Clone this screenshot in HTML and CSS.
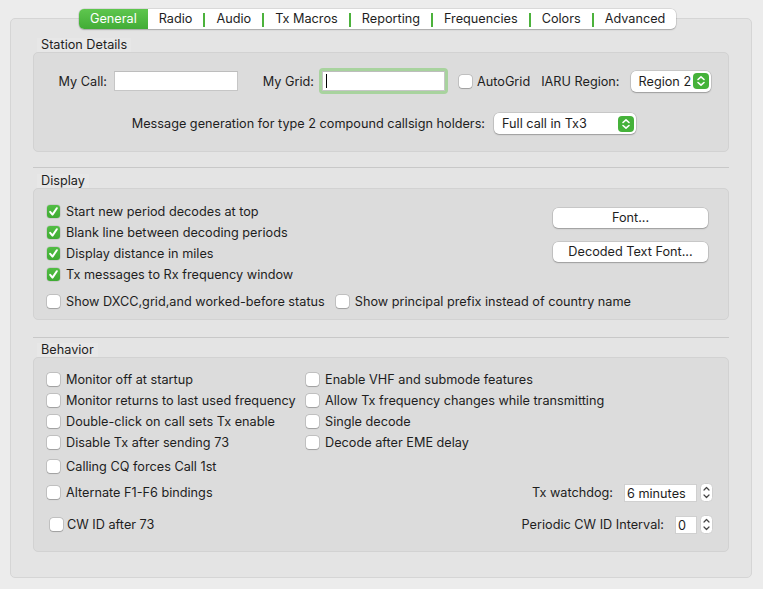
FILE: index.html
```html
<!DOCTYPE html>
<html lang="en">
<head>
    <meta charset="UTF-8">
    <title>Settings - General</title>
    <link rel="stylesheet" href="styles.css">
</head>
<body>
    <div class="window">
        <div class="tabbar">
            <div class="tab active">General</div>
            <div class="tab">Radio</div>
            <span class="tab-sep"></span>
            <div class="tab">Audio</div>
            <span class="tab-sep"></span>
            <div class="tab">Tx Macros</div>
            <span class="tab-sep"></span>
            <div class="tab">Reporting</div>
            <span class="tab-sep"></span>
            <div class="tab">Frequencies</div>
            <span class="tab-sep"></span>
            <div class="tab">Colors</div>
            <span class="tab-sep"></span>
            <div class="tab">Advanced</div>
        </div>

        <div class="pane">
            <!-- Station Details -->
            <div class="group-title">Station Details</div>
            <div class="group station">
                <div class="row-top">
                    <div class="lbl lbl-call">My Call:</div>
                    <div class="field field-call"></div>
                    <div class="lbl lbl-grid">My Grid:</div>
                    <div class="focus-ring">
                        <div class="field field-grid"><span class="caret"></span></div>
                    </div>
                    <div class="check check-autogrid"><span class="cb"></span><span>AutoGrid</span></div>
                    <div class="lbl lbl-iaru">IARU Region:</div>
                    <div class="select select-region">
                        <span>Region 2</span>
                        <svg class="stepper" width="16" height="16" viewBox="0 0 16 16"><rect x="0" y="0" width="16" height="16" rx="4" fill="#45b23a"/><polyline points="5,6.5 8,3.8 11,6.5" fill="none" stroke="#fff" stroke-width="1.6" stroke-linecap="round" stroke-linejoin="round"/><polyline points="5,9.5 8,12.2 11,9.5" fill="none" stroke="#fff" stroke-width="1.6" stroke-linecap="round" stroke-linejoin="round"/></svg>
                    </div>
                </div>
                <div class="row-msg">
                    <div class="lbl lbl-msg">Message generation for type 2 compound callsign holders:</div>
                    <div class="select select-msg">
                        <span>Full call in Tx3</span>
                        <svg class="stepper" width="16" height="16" viewBox="0 0 16 16"><rect x="0" y="0" width="16" height="16" rx="4" fill="#45b23a"/><polyline points="5,6.5 8,3.8 11,6.5" fill="none" stroke="#fff" stroke-width="1.6" stroke-linecap="round" stroke-linejoin="round"/><polyline points="5,9.5 8,12.2 11,9.5" fill="none" stroke="#fff" stroke-width="1.6" stroke-linecap="round" stroke-linejoin="round"/></svg>
                    </div>
                </div>
            </div>

            <hr class="sep sep-first">

            <!-- Display -->
            <div class="group-title">Display</div>
            <div class="group display">
                <div class="display-top">
                    <div class="check-list">
                        <div class="check"><span class="cb on"><svg width="13" height="13" viewBox="0 0 13 13"><polyline points="3.2,6.8 5.5,9.6 9.8,3.2" fill="none" stroke="#fff" stroke-width="2" stroke-linecap="round" stroke-linejoin="round"/></svg></span><span>Start new period decodes at top</span></div>
                        <div class="check"><span class="cb on"><svg width="13" height="13" viewBox="0 0 13 13"><polyline points="3.2,6.8 5.5,9.6 9.8,3.2" fill="none" stroke="#fff" stroke-width="2" stroke-linecap="round" stroke-linejoin="round"/></svg></span><span>Blank line between decoding periods</span></div>
                        <div class="check"><span class="cb on"><svg width="13" height="13" viewBox="0 0 13 13"><polyline points="3.2,6.8 5.5,9.6 9.8,3.2" fill="none" stroke="#fff" stroke-width="2" stroke-linecap="round" stroke-linejoin="round"/></svg></span><span>Display distance in miles</span></div>
                        <div class="check"><span class="cb on"><svg width="13" height="13" viewBox="0 0 13 13"><polyline points="3.2,6.8 5.5,9.6 9.8,3.2" fill="none" stroke="#fff" stroke-width="2" stroke-linecap="round" stroke-linejoin="round"/></svg></span><span>Tx messages to Rx frequency window</span></div>
                    </div>
                    <div class="font-buttons">
                        <div class="btn">Font...</div>
                        <div class="btn">Decoded Text Font...</div>
                    </div>
                </div>
                <div class="display-bottom">
                    <div class="check"><span class="cb"></span><span>Show DXCC,grid,and worked-before status</span></div>
                    <div class="check check-prefix"><span class="cb"></span><span>Show principal prefix instead of country name</span></div>
                </div>
            </div>

            <hr class="sep sep-second">

            <!-- Behavior -->
            <div class="group-title">Behavior</div>
            <div class="group behavior">
                <div class="beh-grid">
                    <div class="check"><span class="cb"></span><span>Monitor off at startup</span></div>
                    <div class="check"><span class="cb"></span><span>Enable VHF and submode features</span></div>
                    <div class="check"><span class="cb"></span><span>Monitor returns to last used frequency</span></div>
                    <div class="check"><span class="cb"></span><span>Allow Tx frequency changes while transmitting</span></div>
                    <div class="check"><span class="cb"></span><span>Double-click on call sets Tx enable</span></div>
                    <div class="check"><span class="cb"></span><span>Single decode</span></div>
                    <div class="check"><span class="cb"></span><span>Disable Tx after sending 73</span></div>
                    <div class="check"><span class="cb"></span><span>Decode after EME delay</span></div>
                </div>
                <div class="beh-row row-cq">
                    <div class="check"><span class="cb"></span><span>Calling CQ forces Call 1st</span></div>
                </div>
                <div class="beh-row row-alt">
                    <div class="check"><span class="cb"></span><span>Alternate F1-F6 bindings</span></div>
                    <div class="spin-field">
                        <span>Tx watchdog:</span>
                        <div class="spin-input spin-watchdog">6 minutes</div>
                        <svg class="spinner" width="13" height="19" viewBox="0 0 13 19"><rect x="0.5" y="0.5" width="12" height="18" rx="4" fill="#fff" stroke="#cfcfcf"/><polyline points="4,7 6.5,4.5 9,7" fill="none" stroke="#444" stroke-width="1.2" stroke-linecap="round" stroke-linejoin="round"/><polyline points="4,12 6.5,14.5 9,12" fill="none" stroke="#444" stroke-width="1.2" stroke-linecap="round" stroke-linejoin="round"/></svg>
                    </div>
                </div>
                <div class="beh-row row-cwid">
                    <div class="check check-cwid"><span class="cb"></span><span>CW ID after 73</span></div>
                    <div class="spin-field">
                        <span>Periodic CW ID Interval:</span>
                        <div class="spin-input spin-interval">0</div>
                        <svg class="spinner" width="13" height="19" viewBox="0 0 13 19"><rect x="0.5" y="0.5" width="12" height="18" rx="4" fill="#fff" stroke="#cfcfcf"/><polyline points="4,7 6.5,4.5 9,7" fill="none" stroke="#444" stroke-width="1.2" stroke-linecap="round" stroke-linejoin="round"/><polyline points="4,12 6.5,14.5 9,12" fill="none" stroke="#444" stroke-width="1.2" stroke-linecap="round" stroke-linejoin="round"/></svg>
                    </div>
                </div>
            </div>
        </div>
    </div>
</body>
</html>
```

FILE: styles.css
```css
body{
    margin: 0;
    background: #ececec;
    font-family: Inter, "Liberation Sans", Arial, sans-serif;
    font-size: 12.7px;
    color: #1e1e1e;
}

.window{
    padding: 9px 11px 0 10px;
}

/* tab bar */
.tabbar{
    display: flex;
    align-items: center;
    width: fit-content;
    height: 20px;
    margin-left: 69px;
    background: #fff;
    border-radius: 5px;
    box-shadow: 0 0 0 0.5px rgba(0,0,0,0.15), 0 1px 1.5px rgba(0,0,0,0.2);
    position: relative;
    z-index: 1;
}

.tab{
    padding: 0 11px;
    line-height: 20px;
}

.tab.active{
    background: linear-gradient(#5ec64e, #42ac36);
    color: #fff;
    border-radius: 5px 0 0 5px;
}

.tab-sep{
    width: 2px;
    height: 14px;
    margin-top: 2px;
    background: #4cb23c;
}

/* main pane */
.pane{
    margin-top: -11px;
    height: 560px;
    box-sizing: border-box;
    background: #e4e4e4;
    border: 1px solid #d5d5d5;
    border-radius: 5px;
    padding: 19px 22px 0 22px;
}

.group-title{
    width: fit-content;
    height: 14px;
    line-height: 14px;
    margin-left: 4px;
    padding: 0 4px;
    background: #e7e7e7;
}

.group{
    background: #dcdcdc;
    border: 1px solid #d2d2d2;
    border-radius: 5px;
    box-sizing: border-box;
}

.sep{
    height: 0;
    border: none;
    border-top: 1px solid #c8c8c8;
}

.sep-first{
    margin: 15px 0 6px;
}

.sep-second{
    margin: 17px 0 5px;
}

/* controls */
.check{
    display: flex;
    align-items: center;
    gap: 6px;
    white-space: nowrap;
}

.cb{
    width: 13px;
    height: 13px;
    flex-shrink: 0;
    border-radius: 3px;
    background: #fff;
    box-shadow: 0 0 0 0.5px rgba(0,0,0,0.22), 0 0.5px 1px rgba(0,0,0,0.18);
}

.cb svg{
    display: block;
}

.cb.on{
    background: linear-gradient(#52bd44, #3fab33);
    box-shadow: 0 0 0 0.5px rgba(0,0,0,0.15);
}

.field{
    height: 20px;
    box-sizing: border-box;
    background: #fff;
    border: 1px solid #c6c6c6;
    border-top-color: #bdbdbd;
}

.select{
    display: flex;
    align-items: center;
    justify-content: space-between;
    height: 21px;
    box-sizing: border-box;
    padding: 0 2px 0 8px;
    background: #fff;
    border-radius: 5px;
    box-shadow: 0 0 0 0.5px rgba(0,0,0,0.18), 0 1px 1.5px rgba(0,0,0,0.22);
}

.stepper{
    display: block;
}

.btn{
    width: 155px;
    height: 20px;
    line-height: 20px;
    text-align: center;
    background: #fff;
    border-radius: 5px;
    box-shadow: 0 0 0 0.5px rgba(0,0,0,0.18), 0 1px 1.5px rgba(0,0,0,0.22);
}

/* station details */
.station{
    height: 100px;
    padding-top: 15px;
}

.row-top{
    display: flex;
    align-items: center;
    height: 26px;
}

.lbl{
    white-space: nowrap;
}

.lbl-call{
    width: 73px;
    text-align: right;
}

.field-call{
    width: 124px;
    margin-left: 7px;
}

.lbl-grid{
    width: 76px;
    text-align: right;
}

.focus-ring{
    margin-left: 5px;
    padding: 3px;
    background: #a8d39e;
    border-radius: 4px;
}

.field-grid{
    width: 123px;
    padding: 2px 0 0 3px;
}

.caret{
    display: block;
    width: 1px;
    height: 14px;
    background: #000;
}

.check-autogrid{
    margin-left: 11px;
    gap: 5px;
}

.lbl-iaru{
    margin-left: 11px;
}

.select-region{
    width: 80px;
    margin-left: 11px;
}

.row-msg{
    display: flex;
    align-items: center;
    height: 21px;
    margin-top: 19px;
}

.lbl-msg{
    width: 451px;
    text-align: right;
}

.select-msg{
    width: 142px;
    margin-left: 9px;
}

/* display */
.display{
    height: 132px;
    padding: 12px 20px 0 13px;
}

.display-top{
    display: flex;
}

.check-list .check{
    height: 21px;
}

.font-buttons{
    margin-left: auto;
    display: flex;
    flex-direction: column;
    gap: 14px;
    padding-top: 7px;
}

.display-bottom{
    display: flex;
    align-items: center;
    height: 21px;
    margin-top: 6px;
}

.check-prefix{
    margin-left: 11px;
}

/* behavior */
.behavior{
    height: 195px;
    padding: 11px 15px 0 13px;
}

.beh-grid{
    display: grid;
    grid-template-columns: 259px auto;
    grid-auto-rows: 21px;
}

.beh-row{
    display: flex;
    align-items: center;
    height: 21px;
}

.row-cq{
    margin-top: 3px;
}

.row-alt{
    margin-top: 5px;
}

.row-cwid{
    margin-top: 11px;
}

.check-cwid{
    margin-left: 3px;
    gap: 4px;
}

.spin-field{
    margin-left: auto;
    display: flex;
    align-items: center;
}

.spin-input{
    height: 18px;
    line-height: 18px;
    box-sizing: border-box;
    padding-left: 2px;
    margin-left: 11px;
    background: #fff;
    border: 1px solid #d0d0d0;
}

.spin-watchdog{
    width: 73px;
}

.spin-interval{
    width: 22px;
}

.spinner{
    display: block;
    margin-left: 3px;
}
```
